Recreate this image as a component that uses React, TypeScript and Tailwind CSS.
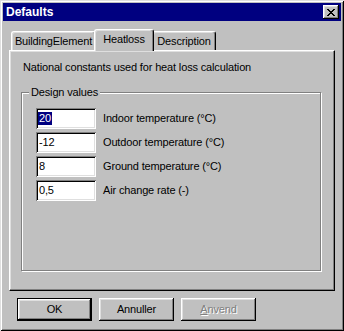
import React from "react";

const raised =
  "shadow-[inset_-1px_-1px_0_#000,inset_1px_1px_0_#fff,inset_-2px_-2px_0_#808080,inset_2px_2px_0_#dfdfdf]";
const sunken =
  "shadow-[inset_1px_1px_0_#808080,inset_-1px_-1px_0_#fff,inset_2px_2px_0_#000,inset_-2px_-2px_0_#dfdfdf]";

const fields = [
  { value: "20", label: "Indoor temperature (°C)", selected: true },
  { value: "-12", label: "Outdoor temperature (°C)" },
  { value: "8", label: "Ground temperature (°C)" },
  { value: "0,5", label: "Air change rate (-)" },
];

function Tab({ label, width, active }: { label: string; width: string; active?: boolean }) {
  return (
    <div
      className={`${width} ${
        active ? "h-[22px] z-10 -mb-[1px] -mx-[2px]" : "h-[19px]"
      } relative flex items-center justify-center bg-[#c0c0c0] rounded-t-[3px] border-t border-l border-r border-t-white border-l-white border-r-black shadow-[inset_-1px_0_0_#808080,inset_1px_1px_0_#dfdfdf]`}
    >
      <span className={active ? "-mt-[2px]" : ""}>{label}</span>
    </div>
  );
}

function Button({ label, isDefault, disabled }: { label: React.ReactNode; isDefault?: boolean; disabled?: boolean }) {
  return (
    <div
      className={`w-[75px] h-[23px] flex items-center justify-center ${
        isDefault ? "border border-black" : ""
      }`}
    >
      <div className={`w-full h-full flex items-center justify-center ${raised}`}>
        <span
          className={
            disabled ? "text-[#808080] [text-shadow:1px_1px_0_#fff]" : "text-black"
          }
        >
          {label}
        </span>
      </div>
    </div>
  );
}

export default function App() {
  return (
    <div className="w-[344px] h-[331px] bg-[#c0c0c0] p-[3px] flex flex-col font-['Liberation_Sans',Arial,sans-serif] text-[11px] tracking-[-0.15px] text-black leading-[13px] shadow-[inset_1px_1px_0_#dfdfdf,inset_-1px_-1px_0_#000,inset_2px_2px_0_#fff,inset_-2px_-2px_0_#808080]">
      {/* Title bar */}
      <div className="h-[18px] bg-[#000080] flex items-center justify-between pl-[3px] pr-[2px]">
        <span className="text-white font-bold text-[12px] tracking-normal">Defaults</span>
        <div className={`w-[16px] h-[14px] bg-[#c0c0c0] flex items-center justify-center ${raised}`}>
          <svg width="8" height="7" viewBox="0 0 8 7" shapeRendering="crispEdges">
            <path
              d="M0 0h2v1h-2zM6 0h2v1h-2zM1 1h2v1h-2zM5 1h2v1h-2zM2 2h4v1h-4zM3 3h2v1h-2zM2 4h4v1h-4zM1 5h2v1h-2zM5 5h2v1h-2zM0 6h2v1h-2zM6 6h2v1h-2z"
              fill="#000"
            />
          </svg>
        </div>
      </div>

      {/* Tabs + panel */}
      <div className="px-[6px] pt-[8px] flex flex-col">
        <div className="flex items-end h-[21px] pl-[2px]">
          <Tab label="BuildingElement" width="w-[85px]" />
          <Tab label="Heatloss" width="w-[60px]" active />
          <Tab label="Description" width="w-[64px]" />
        </div>
        <div className="h-[241px] border-t border-l border-t-white border-l-white border-r border-b border-r-black border-b-black shadow-[inset_-1px_-1px_0_#808080,inset_1px_1px_0_#dfdfdf] flex flex-col pl-[11px]">
          <p className="mt-[10px] ml-[2px]">National constants used for heat loss calculation</p>
          <div className="relative mt-[18px] w-[300px] h-[179px] border border-[#808080] shadow-[1px_1px_0_#fff,inset_1px_1px_0_#fff] pt-[15px] pl-[14px] flex flex-col gap-[3px]">
            <span className="absolute -top-[7px] left-[7px] px-[2px] bg-[#c0c0c0]">Design values</span>
            {fields.map((f) => (
              <div key={f.label} className="flex items-center gap-[7px]">
                <div className={`w-[60px] h-[21px] bg-white flex items-center pl-[3px] ${sunken}`}>
                  <span className={f.selected ? "bg-[#000080] text-white px-[1px] -ml-[1px]" : ""}>
                    {f.value}
                  </span>
                </div>
                <span>{f.label}</span>
              </div>
            ))}
          </div>
        </div>
      </div>

      {/* Buttons */}
      <div className="flex gap-[7px] pl-[14px] mt-[7px]">
        <Button label="OK" isDefault />
        <Button label="Annuller" />
        <Button
          label={
            <>
              <span className="underline">A</span>nvend
            </>
          }
          disabled
        />
      </div>
    </div>
  );
}
